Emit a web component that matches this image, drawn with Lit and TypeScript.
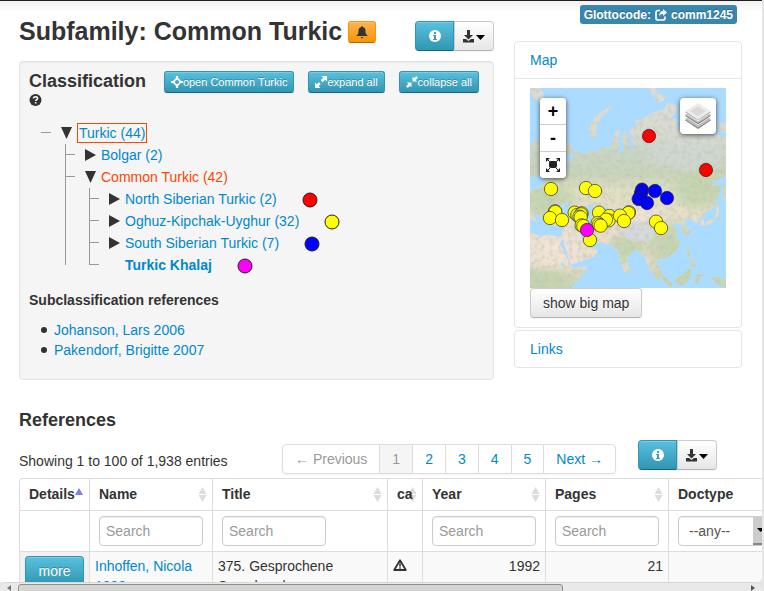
import { LitElement, html, css, svg, nothing } from "lit";
import { customElement } from "lit/decorators.js";
import { classMap } from "lit/directives/class-map.js";

interface TreeNode {
  label: string;
  open?: boolean;
  leaf?: boolean;
  current?: boolean;
  focused?: boolean;
  color?: string;
  children?: TreeNode[];
}

const TREE: TreeNode = {
  label: "Turkic (44)",
  open: true,
  focused: true,
  children: [
    { label: "Bolgar (2)" },
    {
      label: "Common Turkic (42)",
      open: true,
      current: true,
      children: [
        { label: "North Siberian Turkic (2)", color: "#f00" },
        { label: "Oghuz-Kipchak-Uyghur (32)", color: "#ff0" },
        { label: "South Siberian Turkic (7)", color: "#00f" },
        { label: "Turkic Khalaj", leaf: true, color: "#f0f" },
      ],
    },
  ],
};

const MARKERS: [string, number[][]][] = [
  ["#f00", [[357, 144], [528, 246]]],
  ["#ff0", [
    [63, 303], [168, 300], [195, 309], [75, 370], [76, 372], [60, 390], [96, 396],
    [134, 374], [155, 376], [142, 381], [153, 379], [148, 386], [152, 388],
    [155, 412], [160, 414], [207, 374], [238, 384], [297, 373], [295, 375],
    [236, 397], [228, 395], [270, 383], [203, 405], [207, 410], [212, 413],
    [282, 399], [378, 401], [393, 420], [180, 456],
  ]],
  ["#00f", [[336, 305], [333, 316], [375, 309], [411, 330], [330, 330], [326, 333], [351, 345]]],
  ["#f0f", [[171, 426]]],
];

const infoIcon = svg`<svg class="ic" width="12" height="12" viewBox="0 0 12 12" aria-hidden="true">
  <circle cx="6" cy="6" r="6" fill="#fff"/>
  <path d="M5 2h2v2H5zM4 5h3v4h1v1H4V9h1V6H4z" fill="#3a9dbd"/></svg>`;

const downloadIcon = svg`<svg class="ic" width="22" height="13" viewBox="0 0 22 13" aria-hidden="true">
  <path d="M4 0h3v5h3L5.500 9.500 1 5h3zM0 9h3l2.500 2L8 9h3v3.500H0z" fill="#333"/>
  <path d="M13 5h9l-4.500 5z" fill="#000"/></svg>`;

const bellIcon = svg`<svg class="ic" width="12" height="13" viewBox="0 0 12 13" aria-hidden="true">
  <path d="M5.500 0h1v1C9 1.400 9.500 3 9.500 5c0 2.500.5 3.500 2.500 5H0c2-1.500 2.500-2.500 2.500-5 0-2 .5-3.600 3-4zM4.500 11h3L6 12.500z" fill="#333"/></svg>`;

const targetIcon = svg`<svg class="ic" width="12" height="12" viewBox="0 0 12 12" aria-hidden="true">
  <path d="M6 0v4M6 8v4M0 6h4M8 6h4" stroke="#fff" stroke-width="2.200"/>
  <path d="M6 2.200 9.800 6 6 9.800 2.200 6z" fill="none" stroke="#fff" stroke-width="1.700"/></svg>`;

const expandIcon = svg`<svg class="ic" width="12" height="12" viewBox="0 0 12 12" aria-hidden="true">
  <path d="M6.500 0H12v5.500L10.200 3.800 7.700 6.200 5.800 4.300 8.200 1.800zM0 6.500l1.800 1.700 2-2 1.900 1.900-2 2L5.500 12H0z" fill="#fff"/></svg>`;

const collapseIcon = svg`<svg class="ic" width="12" height="12" viewBox="0 0 12 12" aria-hidden="true">
  <path d="M6.500 5.500V0.800L8 2.300 10.300 0 12 1.700 9.700 4l1.500 1.500zM5.500 6.500v4.700L4 9.700 1.700 12 0 10.300 2.300 8 .8 6.500z" fill="#fff"/></svg>`;

const helpIcon = svg`<svg class="ic" width="13" height="12" viewBox="0 0 12 12" aria-hidden="true">
  <circle cx="6" cy="6" r="6" fill="#333"/>
  <path d="M4 4.600C4 3.200 5 2.700 6 2.700s2.100.6 2.100 1.700C8.100 5.700 6.200 5.600 6.200 7" fill="none" stroke="#fff" stroke-width="1.500"/>
  <path d="M5.300 8h1.700v1.500H5.300z" fill="#fff"/></svg>`;

const shareIcon = svg`<svg class="ic" width="12" height="12" viewBox="0 0 12 12" aria-hidden="true">
  <path d="M5 1.500H3A2 2 0 0 0 1 3.500V9a2 2 0 0 0 2 2h5a2 2 0 0 0 2-2V7.500" fill="none" stroke="#fff" stroke-width="1.700"/>
  <path d="M8 0l4 3.500L8 7V5C6 5 5 5.700 4.200 7.500 4 4.500 5.200 2.200 8 2z" fill="#fff"/></svg>`;

const warnIcon = svg`<svg class="ic" width="14" height="12" viewBox="0 0 14 12" aria-hidden="true">
  <path d="M7 1.200 12.800 11H1.200z" fill="none" stroke="#333" stroke-width="1.800" stroke-linejoin="round"/>
  <path d="M6.200 4.500h1.600v3H6.200zM6.200 8.300h1.600v1.400H6.200z" fill="#333"/></svg>`;

const sortIcon = svg`<svg class="sort" width="9" height="15" viewBox="0 0 9 15" aria-hidden="true">
  <path d="M4.500 0 8.500 7h-8zM.5 8h8l-4 7z" fill="#dcdcdc"/></svg>`;

const mapDrawing = svg`<svg class="mapimg" viewBox="0 0 588 600" preserveAspectRatio="xMidYMid slice" role="img" aria-label="Map of languages">
  <defs>
    <linearGradient id="zones" x1="0" y1="0" x2="0" y2="600" gradientUnits="userSpaceOnUse">
      <stop offset="0" stop-color="#dedfd9"/><stop offset=".23" stop-color="#d9dbd0"/>
      <stop offset=".32" stop-color="#c9d6c4"/><stop offset=".43" stop-color="#c8d5ba"/>
      <stop offset=".51" stop-color="#dfdfc1"/><stop offset=".6" stop-color="#e5dfc6"/>
      <stop offset=".72" stop-color="#eadecd"/><stop offset=".86" stop-color="#ebdfcf"/>
      <stop offset="1" stop-color="#c5d4b0"/>
    </linearGradient>
    <radialGradient id="green"><stop offset="0" stop-color="#c4d4af"/><stop offset=".6" stop-color="#c4d4af" stop-opacity=".8"/><stop offset="1" stop-color="#c4d4af" stop-opacity="0"/></radialGradient>
    <radialGradient id="snow"><stop offset="0" stop-color="#d6d9de"/><stop offset=".7" stop-color="#d6d9de" stop-opacity=".9"/><stop offset="1" stop-color="#d6d9de" stop-opacity="0"/></radialGradient>
    <radialGradient id="sand"><stop offset="0" stop-color="#f3e6da"/><stop offset="1" stop-color="#f3e6da" stop-opacity="0"/></radialGradient>
    <filter id="relief" x="0" y="0" width="100%" height="100%">
      <feTurbulence type="fractalNoise" baseFrequency=".07" numOctaves="4" seed="8"/>
      <feColorMatrix values="0 0 0 0 .5  0 0 0 0 .52  0 0 0 0 .45  1.200 0 0 0 -.5"/>
    </filter>
    <clipPath id="land">
      <path d="M0 175 20 155 45 140 80 142 108 158 128 180 132 192 115 203 92 205 108 222 128 214 132 192 150 190 165 200 185 185 208 190 218 174 240 180 248 150 262 122 272 128 262 152 270 172 262 196 282 186 280 162 272 148 285 128 300 150 296 170 312 188 305 150 298 128 318 112 316 98 345 88 372 72 402 62 412 46 436 48 440 70 425 88 446 98 438 120 470 138 500 132 520 140 562 138 588 150 588 262 556 280 545 292 578 292 566 325 550 358 530 372 512 380 508 398 498 408 485 392 462 398 470 420 484 428 472 444 462 440 452 408 438 406 426 416 446 426 434 440 450 462 445 482 425 500 400 512 378 518 388 540 396 560 384 578 362 548 352 528 344 508 326 490 314 484 290 512 296 546 284 554 270 520 262 484 244 472 212 464 190 468 168 452 152 432 158 462 180 478 205 486 192 506 124 530 118 520 98 450 90 466 120 530 130 540 172 534 150 572 122 600 0 600 0 434 32 444 60 442 94 446 102 414 70 412 44 402 30 384 10 378 22 402 0 392z"/>
      <path d="M182 142c-12-18 0-44 26-66 16-14 32-22 38-18-2 12-26 20-34 34-10 18-14 34-12 50 2 12-12 14-18 0z"/>
      <path d="M0 0h28l14 18-6 26-16-6L8 26zM355 2l18-4 10 16 24 10-8 16-18 2-12-22zM560 106l28 0v30l-20-6z"/>
      <path d="M506 370l14 2 4 14-12 2zM516 390l8 14 10-6 18-6 8-22-4-20 8-4 4 24-8 24-18 12-22 8-10-4zM582 296l6-8v40l-8 10zM470 482l8 0 2 18 10 12-6 2-14-18zM478 520l16 2 4 14-14 0zM296 538l8 8-4 12-8-6zM452 565l26-24 8 10-12 26-18 18-18-10-2-14zM394 556l34 34-6 10-26-26zM500 558l30 2-20 6-6 20-10 4zM544 568l20-2 24 12v22l-28-12z"/>
    </clipPath>
  </defs>
  <rect width="588" height="600" fill="#abdbff"/>
  <g clip-path="url(#land)">
    <rect width="588" height="600" fill="url(#zones)"/>
    <ellipse cx="55" cy="340" rx="100" ry="65" fill="url(#green)"/>
    <ellipse cx="30" cy="575" rx="110" ry="40" fill="url(#green)"/>
    <ellipse cx="290" cy="480" rx="70" ry="55" fill="url(#green)"/>
    <ellipse cx="425" cy="475" rx="95" ry="90" fill="url(#green)"/>
    <ellipse cx="510" cy="300" rx="100" ry="75" fill="url(#green)"/>
    <ellipse cx="475" cy="570" rx="140" ry="60" fill="url(#green)"/>
    <ellipse cx="70" cy="485" rx="130" ry="70" fill="url(#sand)"/>
    <ellipse cx="335" cy="375" rx="95" ry="38" fill="url(#sand)"/>
    <ellipse cx="325" cy="430" rx="65" ry="34" fill="url(#snow)"/>
    <ellipse cx="470" cy="200" rx="140" ry="60" fill="url(#snow)" opacity=".5"/>
    <rect width="588" height="600" filter="url(#relief)"/>
  </g>
  <g fill="#abdbff">
    <path d="M58 366q18-20 38-14l6-8 14 0-8 12q18 8 18 24-24 6-38 2-18 6-30 0zM164 362q10-14 24-10l4 14-10 6 6 20 14 12-2 16-14 4-12-20zM0 268l24-8 40 4-20 12-14 24-30 8zM222 360l12-4 2 14-8 2zM386 300l10-16 4 2-8 18zM92 528l6-6 4 6-6 8z"/>
  </g>
  <g stroke="#222" stroke-width="2">
    ${MARKERS.map(([fill, pts]) => pts.map(([x, y]) => svg`<circle cx=${x} cy=${y} r="20" fill=${fill}/>`))}
  </g>
</svg>`;

const layersIcon = svg`<svg width="26" height="26" viewBox="0 0 78 78" aria-hidden="true">
  <path d="M0 52 39 27l39 25-39 26z" fill="#7f7f7f"/><path d="M0 49 39 24l39 25-39 25z" fill="#bdbdbd"/>
  <path d="M0 40 39 15l39 25-39 26z" fill="#fff"/><path d="M0 38 39 13l39 25-39 26z" fill="#777"/><path d="M0 35 39 11l39 24-39 25z" fill="#c8c8c8"/>
  <path d="M0 28 39 3l39 25-39 26z" fill="#fff"/><path d="M0 27 39 2l39 25-39 25z" fill="#8f8f8f"/><path d="M0 25 39 0l39 25-39 25z" fill="#ececec"/>
  <path d="M16 25 39 10l23 15-23 15z" fill="#d9d9d9"/></svg>`;

const fullIcon = svg`<svg width="16" height="16" viewBox="0 0 16 16" aria-hidden="true">
  <rect x="4" y="4" width="8" height="7" rx="2" fill="#222"/>
  <path d="M1 1h4L1 5zM15 1v4l-4-4zM1 15v-4l4 4zM15 15h-4l4-4z" fill="#222"/>
  <path d="M2 2l3 3M14 2l-3 3M2 14l3-3M14 14l-3-3" stroke="#222"/></svg>`;

@customElement("app-root")
export class AppRoot extends LitElement {
  static styles = css`
    :host {
      display: flex;
      flex-direction: column;
      height: 100vh;
      overflow: hidden;
      background: #e6e6e6;
      color: #333;
      font: 14px/20px "Liberation Sans", Arial, sans-serif;
    }
    * { box-sizing: border-box; }
    a { color: #0088cc; text-decoration: none; }
    h1, h2, h3, p, ul { margin: 0; padding: 0; }
    button, input, select { font: inherit; color: inherit; margin: 0; }
    svg { display: block; flex: none; }
    .page {
      flex: 1;
      min-height: 0;
      overflow: hidden;
      margin-right: 2px;
      padding: 0 20px 0 19px;
      border-top: 1px solid #221f24;
      background: linear-gradient(#f3f3f3, #fff 12px);
      border-bottom-right-radius: 5px;
    }
    .columns {
      display: grid;
      grid-template-columns: minmax(0, 25fr) minmax(0, 12fr);
      gap: 20px;
      align-items: start;
    }
    .title { display: flex; align-items: flex-start; gap: 6px; padding-top: 20px; margin-bottom: 10px; }
    h1 { font-size: 25px; line-height: 20px; font-weight: bold; white-space: nowrap; }
    h2 { font-size: 18px; line-height: 20px; font-weight: bold; }
    h3 { font-size: 14px; line-height: 20px; font-weight: bold; }

    .btn {
      display: inline-flex;
      align-items: center;
      justify-content: center;
      height: 30px;
      padding: 0 12px;
      border: 1px solid #ccc;
      border-bottom-color: #b3b3b3;
      border-radius: 4px;
      background: linear-gradient(#fff, #e6e6e6);
      box-shadow: inset 0 1px 0 rgba(255, 255, 255, 0.2), 0 1px 2px rgba(0, 0, 0, 0.05);
      text-shadow: 0 1px 1px rgba(255, 255, 255, 0.75);
      white-space: nowrap;
    }
    .info {
      color: #fff;
      background: linear-gradient(#5bc0de, #2f96b4);
      border-color: #2f96b4 #2f96b4 #1f6377;
      text-shadow: 0 -1px 0 rgba(0, 0, 0, 0.25);
    }
    .warning { background: linear-gradient(#fbb450, #f89406); border-color: #f89406 #f89406 #ad6704; }
    .mini { height: 22px; padding: 0 6px; font-size: 11px; border-radius: 3px; }
    .bell { width: 28px; }
    .group { display: flex; }
    .title .group { margin-left: auto; }
    .group .btn { width: 40px; padding: 0; }
    .group .info { width: 39px; border-radius: 4px 0 0 4px; }
    .group .plain { border-radius: 0 4px 4px 0; }

    .well {
      padding: 9px 9px 19px;
      border: 1px solid #e3e3e3;
      border-radius: 4px;
      background: #f5f5f5;
      box-shadow: inset 0 1px 1px rgba(0, 0, 0, 0.05);
    }
    .well header { display: flex; align-items: flex-start; gap: 14px; padding-right: 5px; margin-bottom: 14px; }
    .well header h2 { flex: 1; }
    .help { display: flex; align-items: center; height: 17px; }
    .tree, .tree ul { list-style: none; }
    .tree { padding-left: 12px; margin-bottom: 14px; }
    .tree ul { margin-left: 4px; }
    .tree li {
      padding-left: 20px;
      background:
        linear-gradient(#999, #999) 0 10px / 10px 1px no-repeat,
        linear-gradient(#999, #999) 0 0 / 1px 100% no-repeat;
    }
    .tree li:last-child { background-size: 10px 1px, 1px calc(100% - 11px); }
    .tree li.leaf { background-size: 10px 1px, 1px 11px; }
    .tree > li:last-child { background-size: 10px 1px, 0 0; }
    .row { display: flex; align-items: center; height: 22px; gap: 4px; }
    .row a { white-space: nowrap; }
    .row .current { color: #ff4500; }
    .row .focused { border: 1px solid #ff4500; height: 20px; line-height: 18px; padding: 0 1px; }
    .row .strong { font-weight: bold; }
    .toggle { width: 12px; height: 20px; padding: 0; border: 0; background: none; display: flex; align-items: center; }
    .swatch { margin-left: 21px; margin-top: 1px; }
    .sources { list-style: none; padding-left: 12px; margin-top: 10px; }
    .sources li { display: flex; align-items: center; gap: 7px; }
    .sources li::before { content: ""; width: 6px; height: 6px; border-radius: 3px; background: #333; }

    .side { padding-top: 4px; }
    .badge {
      display: flex;
      align-items: center;
      gap: 4px;
      width: fit-content;
      height: 19px;
      margin: 0 5px 17px auto;
      padding: 0 4px;
      border-radius: 3px;
      background: #3a87ad;
      color: #fff;
      font-size: 12px;
      font-weight: bold;
      text-shadow: 0 -1px 0 rgba(0, 0, 0, 0.25);
      white-space: nowrap;
    }
    .panel { border: 1px solid #e5e5e5; border-radius: 4px; margin-bottom: 2px; background: #fff; }
    .panel h2 { font-size: 14px; font-weight: normal; padding: 8px 15px; }
    .panel .body { border-top: 1px solid #e5e5e5; padding: 9px 15px; }
    .map { position: relative; }
    .mapimg { width: 100%; height: 200px; }
    .zoom, .layers { position: absolute; top: 10px; border-radius: 4px; background: #fff; box-shadow: 0 1px 5px rgba(0, 0, 0, 0.65); }
    .zoom { left: 10px; width: 26px; overflow: hidden; }
    .zoom button {
      display: flex;
      align-items: center;
      justify-content: center;
      width: 26px;
      height: 27px;
      padding: 0;
      border: 0;
      border-bottom: 1px solid #ccc;
      background: #fff;
      color: #000;
      font-size: 18px;
      font-weight: bold;
    }
    .zoom button:last-child { height: 26px; border-bottom: 0; }
    .layers { right: 10px; display: flex; align-items: center; justify-content: center; width: 36px; height: 36px; padding: 0; border: 0; }

    .refs { margin-top: 30px; }
    .tools { display: grid; grid-template-columns: 241px auto auto; justify-content: start; align-items: start; column-gap: 22px; margin-top: 10px; margin-bottom: 4px; }
    .tools p { padding-top: 11px; white-space: nowrap; }
    .pages { display: flex; list-style: none; height: 30px; margin-top: 4px; border: 1px solid #ddd; border-radius: 4px; box-shadow: 0 1px 2px rgba(0, 0, 0, 0.05); }
    .pages a { display: block; padding: 4px 12px; height: 28px; white-space: nowrap; }
    .pages li + li { border-left: 1px solid #ddd; }
    .pages .off a { color: #999; }
    .pages .on a { color: #999; background: #f5f5f5; }

    table { width: 880px; table-layout: fixed; border-collapse: separate; border-spacing: 0; border: 1px solid #ddd; border-left: 0; border-radius: 4px; }
    th, td { border-left: 1px solid #ddd; border-top: 1px solid #ddd; vertical-align: top; text-align: left; }
    tr:first-child th { border-top: 0; }
    tr:first-child th:first-child { border-top-left-radius: 4px; }
    th { height: 31px; padding: 5px 0 5px 9px; white-space: nowrap; }
    .head { display: flex; align-items: center; justify-content: space-between; padding-right: 5px; }
    .head.tight { justify-content: flex-start; padding: 0; }
    .head.tight .asc { margin-bottom: 6px; }
    .head.tight .sort { margin-left: -5px; }
    .head.tight span { position: relative; }
    .filters td { height: 41px; padding: 5px 9px; }
    tbody td { padding: 4px 5px; background: #f9f9f9; }
    tbody td:first-child { background: #f1f1f1; }
    td.num { text-align: right; }
    td.warn { padding-top: 7px; }
    input, select { display: block; width: 104px; height: 30px; padding: 0 6px; border: 1px solid #ccc; border-radius: 4px; background: #fff; box-shadow: inset 0 1px 1px rgba(0, 0, 0, 0.075); }
    input::placeholder { color: #999; opacity: 1; }
    .drop { position: relative; width: 104px; }
    .drop select { appearance: none; color: #555; padding-left: 10px; }
    .arrow { position: absolute; right: 1px; top: 1px; width: 28px; height: 28px; background: #ccc; border-bottom: 2px solid #888; pointer-events: none; }
    .c1 { width: 70px; } .c2 { width: 123px; } .c3 { width: 175px; } .c4 { width: 35px; }
    .more { width: 59px; }

    .hbar { display: flex; align-items: flex-start; height: 9px; padding: 1px 7px 0; background: #e9e9e9; border-top: 1px solid #d8d8d8; border-radius: 6px 6px 0 0; margin-right: 2px; }
    .hbar svg { margin-top: 1px; }
    .track { flex: 1; margin: 0 6px 0 7px; }
    .thumb { width: 75%; height: 9px; border: 1px solid #909090; border-radius: 3px 3px 0 0; background: #d5d6d4; }
  `;

  private node(n: TreeNode): unknown {
    return html`<li class=${classMap({ leaf: !!n.leaf })}>
      <div class="row">
        ${n.leaf
          ? html`<span class="toggle"></span>`
          : html`<button class="toggle" aria-label=${n.open ? "Collapse" : "Expand"}>
              <svg width="12" height="12" viewBox="0 0 12 12">
                <path d=${n.open ? "M0 0h11L5.5 12z" : "M0 0 11 6 0 12z"} fill="#333" />
              </svg>
            </button>`}
        <a href="#" class=${classMap({ current: !!n.current, focused: !!n.focused, strong: !!n.leaf })}>${n.label}</a>
        ${n.color
          ? html`<svg class="swatch" width="16" height="16" viewBox="0 0 16 16">
              <circle cx="8" cy="8" r="7" fill=${n.color} stroke="#222" />
            </svg>`
          : nothing}
      </div>
      ${n.children ? html`<ul>${n.children.map((c) => this.node(c))}</ul>` : nothing}
    </li>`;
  }

  private actions() {
    return html`<div class="group">
      <button class="btn info" aria-label="Info">${infoIcon}</button>
      <button class="btn plain" aria-label="Download">${downloadIcon}</button>
    </div>`;
  }

  private search(name: string) {
    return html`<td><input type="text" placeholder="Search" aria-label=${name} /></td>`;
  }

  private head(name: string) {
    return html`<th scope="col"><div class="head">${name}${sortIcon}</div></th>`;
  }

  render() {
    return html`
      <main class="page">
        <div class="columns">
          <section>
            <div class="title">
              <h1>Subfamily: Common Turkic</h1>
              <button class="btn warning mini bell" aria-label="Notify">${bellIcon}</button>
              ${this.actions()}
            </div>
            <div class="well">
              <header>
                <h2>Classification<span class="help">${helpIcon}</span></h2>
                <button class="btn info mini">${targetIcon}open Common Turkic</button>
                <button class="btn info mini">${expandIcon}expand all</button>
                <button class="btn info mini">${collapseIcon}collapse all</button>
              </header>
              <ul class="tree">${this.node(TREE)}</ul>
              <h3>Subclassification references</h3>
              <ul class="sources">
                <li><a href="#">Johanson, Lars 2006</a></li>
                <li><a href="#">Pakendorf, Brigitte 2007</a></li>
              </ul>
            </div>
          </section>
          <aside class="side">
            <a class="badge" href="#"><span>Glottocode:</span>${shareIcon}<span>comm1245</span></a>
            <div class="panel">
              <h2><a href="#">Map</a></h2>
              <div class="body">
                <div class="map">
                  ${mapDrawing}
                  <div class="zoom">
                    <button>+</button>
                    <button>-</button>
                    <button aria-label="Full screen">${fullIcon}</button>
                  </div>
                  <button class="layers" aria-label="Layers">${layersIcon}</button>
                </div>
                <button class="btn">show big map</button>
              </div>
            </div>
            <div class="panel"><h2><a href="#">Links</a></h2></div>
          </aside>
        </div>
        <section class="refs">
          <h2>References</h2>
          <div class="tools">
            <p>Showing 1 to 100 of 1,938 entries</p>
            <ul class="pages">
              <li class="off"><a href="#">← Previous</a></li>
              <li class="on"><a href="#">1</a></li>
              ${[2, 3, 4, 5].map((p) => html`<li><a href="#">${p}</a></li>`)}
              <li><a href="#">Next →</a></li>
            </ul>
            ${this.actions()}
          </div>
          <table>
            <colgroup>
              <col class="c1" /><col class="c2" /><col class="c3" /><col class="c4" />
              <col class="c2" /><col class="c2" /><col />
            </colgroup>
            <thead>
              <tr>
                <th scope="col">
                  <div class="head tight">Details<svg class="asc" width="8" height="7" viewBox="0 0 8 7"><path d="M4 0l4 7H0z" fill="#8080e0" /></svg></div>
                </th>
                ${this.head("Name")} ${this.head("Title")}
                <th scope="col"><div class="head tight"><span>ca</span>${sortIcon}</div></th>
                ${this.head("Year")} ${this.head("Pages")} ${this.head("Doctype")}
              </tr>
              <tr class="filters">
                <td></td>
                ${this.search("Name")} ${this.search("Title")}
                <td></td>
                ${this.search("Year")} ${this.search("Pages")}
                <td>
                  <div class="drop">
                    <select aria-label="Doctype"><option>--any--</option></select>
                    <svg class="arrow" viewBox="0 0 28 26" preserveAspectRatio="xMinYMin"><path d="M4 11h7l-3.500 4z" fill="#000" /></svg>
                  </div>
                </td>
              </tr>
            </thead>
            <tbody>
              <tr>
                <td><button class="btn info more">more</button></td>
                <td><a href="#">Inhoffen, Nicola 1992</a></td>
                <td>375. Gesprochene Sprachproben</td>
                <td class="warn">${warnIcon}</td>
                <td class="num">1992</td>
                <td class="num">21</td>
                <td></td>
              </tr>
            </tbody>
          </table>
        </section>
      </main>
      <div class="hbar" aria-hidden="true">
        <svg width="4" height="6" viewBox="0 0 4 6"><path d="M4 0v6L0 3z" fill="#777" /></svg>
        <div class="track"><div class="thumb"></div></div>
        <svg width="4" height="6" viewBox="0 0 4 6"><path d="M0 0v6l4-3z" fill="#555" /></svg>
      </div>
    `;
  }
}
